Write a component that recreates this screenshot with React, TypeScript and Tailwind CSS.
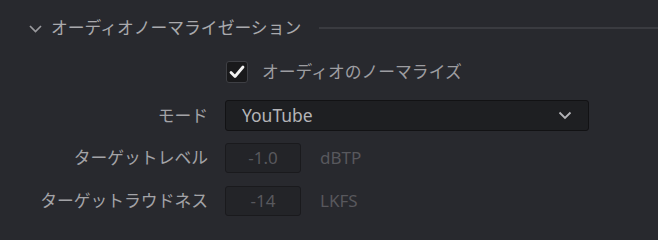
import React from "react";

const font = { fontFamily: '"Noto Sans", "Noto Sans CJK JP", sans-serif' };

export default function App() {
  return (
    <div
      className="w-[658px] h-[240px] bg-[#28292e] overflow-hidden relative"
      style={font}
    >
      {/* Header */}
      <div className="flex items-center h-[20px] mt-[18px]">
        <svg
          className="ml-[29px] mt-[1px] shrink-0"
          width="13"
          height="8"
          viewBox="0 0 13 8"
          fill="none"
        >
          <path d="M1 1 L6.5 6.5 L12 1" stroke="#9a9a9e" strokeWidth="1.7" />
        </svg>
        <span className="ml-[9px] text-[16.8px] leading-[20px] text-[#a9a9ad] whitespace-nowrap">
          オーディオノーマライゼーション
        </span>
        <div className="ml-[18px] flex-1 h-[2px] bg-[#3a3b40]" />
      </div>

      {/* Checkbox row */}
      <div className="flex items-center mt-[23px] h-[22px]">
        <div className="ml-[226px] w-[22px] h-[22px] rounded-[3px] bg-[#19191b] border border-[#3e3f44] flex items-center justify-center">
          <svg width="16" height="14" viewBox="0 0 16 14" fill="none">
            <path
              d="M2 7.5 L6 11.5 L14 2"
              stroke="#f2f2f2"
              strokeWidth="2.8"
              strokeLinecap="round"
              strokeLinejoin="round"
            />
          </svg>
        </div>
        <span className="ml-[14px] text-[16.8px] text-[#9d9da1] whitespace-nowrap">
          オーディオのノーマライズ
        </span>
      </div>

      {/* Mode row */}
      <div className="flex items-center mt-[17px] h-[31px]">
        <div className="w-[208px] text-right text-[16.8px] text-[#a3a3a7] whitespace-nowrap">
          モード
        </div>
        <div className="ml-[17px] w-[364px] h-[31px] rounded-[3px] bg-[#1e1f22] border border-[#121214] flex items-center justify-between pl-[16px] pr-[16px]">
          <span className="text-[17.5px] text-[#b4b4b8]">YouTube</span>
          <svg width="14" height="9" viewBox="0 0 14 9" fill="none">
            <path d="M1.5 1.5 L7 7 L12.5 1.5" stroke="#b4b4b8" strokeWidth="1.8" />
          </svg>
        </div>
      </div>

      {/* Target level */}
      <div className="flex items-center mt-[12px] h-[30px]">
        <div className="w-[208px] text-right text-[16.8px] text-[#a3a3a7] whitespace-nowrap">
          ターゲットレベル
        </div>
        <div className="ml-[17px] w-[76px] h-[30px] rounded-[3px] bg-[#232428] border border-[#1a1a1d] flex items-center justify-center">
          <span className="text-[17px] text-[#58585d]">-1.0</span>
        </div>
        <span className="ml-[19px] text-[17px] text-[#58585d]">dBTP</span>
      </div>

      {/* Target loudness */}
      <div className="flex items-center mt-[13px] h-[30px]">
        <div className="w-[208px] text-right text-[16.8px] text-[#a3a3a7] whitespace-nowrap">
          ターゲットラウドネス
        </div>
        <div className="ml-[17px] w-[76px] h-[30px] rounded-[3px] bg-[#232428] border border-[#1a1a1d] flex items-center justify-center">
          <span className="text-[17px] text-[#58585d]">-14</span>
        </div>
        <span className="ml-[19px] text-[17px] text-[#58585d]">LKFS</span>
      </div>
    </div>
  );
}
